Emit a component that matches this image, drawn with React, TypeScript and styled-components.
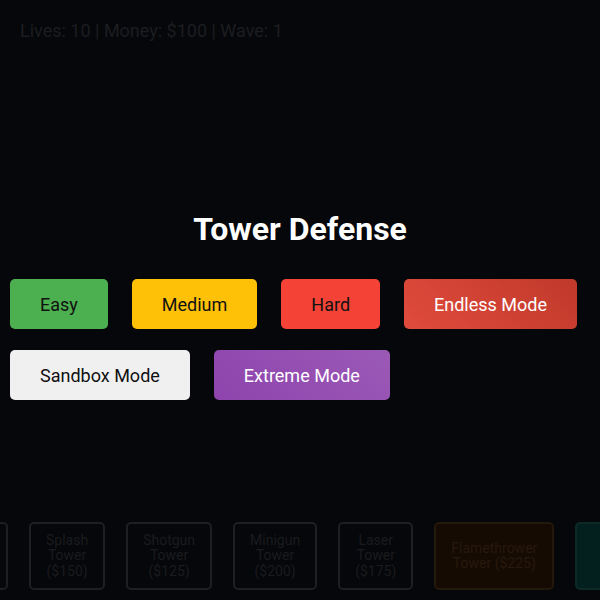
import React from 'react';
import styled, { createGlobalStyle, css } from 'styled-components';

type Mode = 'easy' | 'medium' | 'hard' | 'endless' | 'sandbox' | 'extreme';

const modes: { id: Mode; label: string }[] = [
  { id: 'easy', label: 'Easy' },
  { id: 'medium', label: 'Medium' },
  { id: 'hard', label: 'Hard' },
  { id: 'endless', label: 'Endless Mode' },
  { id: 'sandbox', label: 'Sandbox Mode' },
  { id: 'extreme', label: 'Extreme Mode' },
];

type Tint = 'plain' | 'fire' | 'ice';

const towers: { name: string; tint: Tint }[] = [
  { name: 'Basic Tower ($100)', tint: 'plain' },
  { name: 'Splash Tower ($150)', tint: 'plain' },
  { name: 'Shotgun Tower ($125)', tint: 'plain' },
  { name: 'Minigun Tower ($200)', tint: 'plain' },
  { name: 'Laser Tower ($175)', tint: 'plain' },
  { name: 'Flamethrower Tower ($225)', tint: 'fire' },
  { name: 'Lightning Tower ($250)', tint: 'ice' },
];

const App: React.FC = () => {
  return (
    <>
      <GlobalStyle />
      <Screen>
        <Hud>Lives: 10 | Money: $100 | Wave: 1</Hud>
        <Stage>
          <Title>Tower Defense</Title>
          <ModeList>
            {modes.map((m) => (
              <ModeButton key={m.id} $mode={m.id}>
                {m.label}
              </ModeButton>
            ))}
          </ModeList>
        </Stage>
        <TowerBar>
          {towers.map((t) => (
            <TowerButton key={t.name} $tint={t.tint}>
              {t.name}
            </TowerButton>
          ))}
        </TowerBar>
      </Screen>
    </>
  );
};

export default App;

const GlobalStyle = createGlobalStyle`
  html, body {
    margin: 0;
    padding: 0;
    background: #06070a;
  }
  body {
    font-family: Roboto, "Liberation Sans", sans-serif;
  }
`;

const Screen = styled.div`
  display: flex;
  flex-direction: column;
  height: 100vh;
  overflow: hidden;
  background: #06070a;
`;

const Hud = styled.div`
  padding: 20px 20px 0;
  font-size: 18px;
  line-height: 21px;
  color: #1c1d21;
`;

const Stage = styled.div`
  flex: 1;
  display: flex;
  flex-direction: column;
  justify-content: center;
  padding-top: 60px;
`;

const Title = styled.h1`
  margin: 0 0 31px;
  text-align: center;
  font-size: 32px;
  line-height: 37px;
  font-weight: 700;
  color: #fff;
`;

const modeColors: Record<Mode, ReturnType<typeof css>> = {
  easy: css`
    background: #4caf50;
    color: #111;
  `,
  medium: css`
    background: #ffc107;
    color: #111;
  `,
  hard: css`
    background: #f44336;
    color: #111;
  `,
  endless: css`
    background: linear-gradient(45deg, #e04b3c, #c0392b);
    color: #fff;
  `,
  sandbox: css`
    background: #f0f0f0;
    color: #111;
  `,
  extreme: css`
    background: linear-gradient(45deg, #8e44ad, #9b59b6);
    color: #fff;
  `,
};

const ModeList = styled.div`
  display: flex;
  flex-wrap: wrap;
  justify-content: flex-start;
  column-gap: 24px;
  row-gap: 21px;
  padding: 0 10px;
`;

const ModeButton = styled.button<{ $mode: Mode }>`
  padding: 0 30px;
  height: 50px;
  border: none;
  border-radius: 5px;
  font-family: Roboto, "Liberation Sans", sans-serif;
  font-size: 18px;
  cursor: pointer;
  ${(p) => modeColors[p.$mode]}
`;

const tintColors: Record<Tint, ReturnType<typeof css>> = {
  plain: css`
    background: transparent;
    border-color: #1e1f23;
    color: #1a1b1f;
  `,
  fire: css`
    background: #160b03;
    border-color: #24170b;
    color: #27190d;
  `,
  ice: css`
    background: #03201f;
    border-color: #0c2928;
    color: #08201f;
  `,
};

const TowerBar = styled.div`
  display: flex;
  justify-content: center;
  gap: 21px;
  padding: 12px 0 10px;
`;

const TowerButton = styled.button<{ $tint: Tint }>`
  height: 68px;
  padding: 0 15px;
  border: 2px solid;
  border-radius: 5px;
  font-family: Roboto, "Liberation Sans", sans-serif;
  font-size: 14px;
  line-height: 15.5px;
  cursor: pointer;
  ${(p) => tintColors[p.$tint]}
`;
